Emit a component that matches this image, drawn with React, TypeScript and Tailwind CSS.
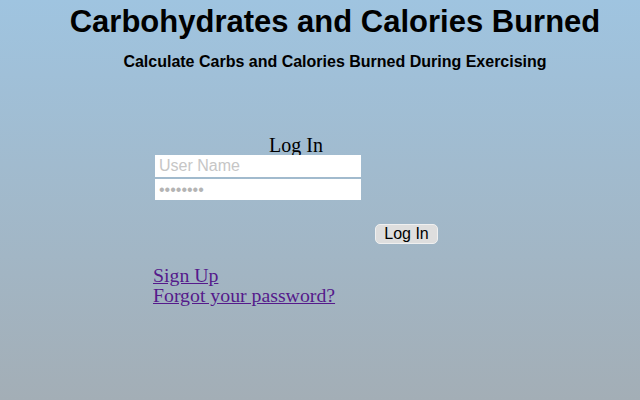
export default function App() {
  return (
    <div className="w-[640px] h-[400px] overflow-hidden bg-gradient-to-b from-[#9fc4e0] to-[#a3aeb6]">
      <div className="pl-[30px] text-center font-['Liberation_Sans',Arial,sans-serif] font-bold text-black">
        <h1 className="pt-[4px] text-[31px] leading-[36px]">Carbohydrates and Calories Burned</h1>
        <h2 className="mt-[13px] text-[16px] leading-[18px]">Calculate Carbs and Calories Burned During Exercising</h2>
      </div>

      <form className="mt-[64px] ml-[155px] w-[206px] flex flex-col font-['Liberation_Serif','Times_New_Roman',serif]">
        <div className="pl-[114px] text-[20px] leading-[20px] text-black whitespace-nowrap">
          Log In
        </div>
        <input
          type="text"
          placeholder="User Name"
          className="h-[22px] w-[206px] bg-white px-[4px] text-[16px] font-['Liberation_Sans',Arial,sans-serif] placeholder:text-[#c6c6c6] outline-none"
        />
        <input
          type="password"
          placeholder="••••••••"
          className="mt-[2px] h-[21px] w-[206px] bg-white px-[4px] text-[16px] font-['Liberation_Sans',Arial,sans-serif] placeholder:text-[#b4b4b4] outline-none"
        />
        <div className="mt-[24px] flex justify-end">
          <button
            type="button"
            className="-mr-[77px] h-[20px] w-[63px] rounded-[5px] border border-[#f0f0f0] bg-[#dedede] text-[16px] leading-[18px] font-['Liberation_Sans',Arial,sans-serif] text-black"
          >
            Log In
          </button>
        </div>
      </form>

      <div className="mt-[21px] ml-[153px] flex flex-col font-['Liberation_Serif','Times_New_Roman',serif] text-[19.8px] leading-[20px] text-[#551a8b]">
        <a href="#" className="underline w-fit">Sign Up</a>
        <a href="#" className="underline w-fit">Forgot your password?</a>
      </div>
    </div>
  );
}
